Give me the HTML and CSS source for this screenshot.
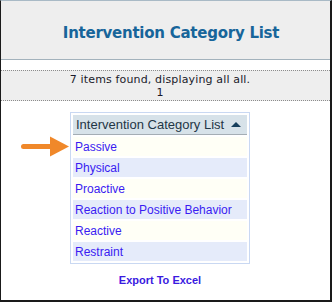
FILE: index.html
```html
<!DOCTYPE html>
<html>
<head>
<meta charset="utf-8">
<link rel="stylesheet" href="styles.css">
</head>
<body>
<div class="frame">
  <div class="header"><h1 class="title">Intervention Category List</h1></div>
  <div class="status">
    <div>7 items found, displaying all all.</div>
    <div>1</div>
  </div>
  <div class="main">
    <div class="table-wrap">
      <svg class="pointer" width="49" height="21" viewBox="0 0 49 21">
        <line x1="2.5" y1="10.5" x2="31" y2="10.5" stroke="#f0882a" stroke-width="5" stroke-linecap="round"/>
        <polygon points="29,0.5 48,10.5 29,20.5" fill="#f0882a"/>
      </svg>
      <table class="list">
        <thead>
          <tr><th><span>Intervention Category List</span><span class="sort"></span></th></tr>
        </thead>
        <tbody>
          <tr class="odd"><td><a>Passive</a></td></tr>
          <tr class="even"><td><a>Physical</a></td></tr>
          <tr class="odd"><td><a>Proactive</a></td></tr>
          <tr class="even"><td><a>Reaction to Positive Behavior</a></td></tr>
          <tr class="odd"><td><a>Reactive</a></td></tr>
          <tr class="even"><td><a>Restraint</a></td></tr>
        </tbody>
      </table>
    </div>
    <a class="export">Export To Excel</a>
  </div>
</div>
</body>
</html>
```

FILE: styles.css
```css
html, body {
  margin: 0;
  padding: 0;
  background: #ffffff;
}
.frame {
  width: 332px;
  height: 302px;
  box-sizing: border-box;
  border-top: 1px solid #a9bac6;
  border-left: 1px solid #1a1a1a;
  border-right: 2px solid #1a1a1a;
  border-bottom: 2px solid #1a1a1a;
  background: #ffffff;
  overflow: hidden;
}
.header {
  background: #eeeeee;
  border-bottom: 1px solid #a3b2bc;
  display: flex;
  align-items: center;
  justify-content: center;
  padding-left: 11px;
  padding-top: 6px;
  box-sizing: content-box;
  height: 52px;
}
.title {
  margin: 0;
  font-family: "DejaVu Sans", Verdana, sans-serif;
  font-weight: bold;
  font-size: 15px;
  color: #17659a;
  letter-spacing: -0.25px;
}
.status {
  margin-top: 10px;
  border-top: 1px dotted #8c8c8c;
  border-bottom: 1px dotted #8c8c8c;
  background: #eeeeee;
  height: 27px;
  padding-top: 2px;
  padding-right: 11px;
  text-align: center;
  font-family: "DejaVu Sans", Verdana, sans-serif;
  font-size: 11px;
  letter-spacing: 0.15px;
  line-height: 13px;
  color: #1a1a2a;
}
.main {
  display: flex;
  flex-direction: column;
  align-items: center;
  padding-right: 11px;
  padding-top: 11px;
}
.table-wrap {
  position: relative;
}
.pointer {
  position: absolute;
  left: -49px;
  top: 24px;
}
.list {
  width: 180px;
  border: 1px solid #c9d8f2;
  border-spacing: 2px;
  font-family: "Liberation Sans", Arial, sans-serif;
}
.list th {
  height: 20px;
  padding: 0 4px 0 3px;
  box-sizing: border-box;
  background: #d7e2e9;
  border-bottom: 1px solid #a4adb4;
  text-align: left;
  font-weight: normal;
  font-size: 13px;
  color: #1f3646;
}
.list th span {
  vertical-align: middle;
}
.sort {
  display: inline-block;
  width: 0;
  height: 0;
  margin-left: 7px;
  border-left: 5px solid transparent;
  border-right: 5px solid transparent;
  border-bottom: 5px solid #163f5c;
  position: relative;
  top: -1px;
}
.list td {
  height: 19px;
  padding: 0 2px;
  font-size: 12px;
}
.list a {
  color: #3a1cf2;
}
.odd td {
  background: #fffff6;
}
.even td {
  background: #e5ebfa;
}
.export {
  margin-top: 10px;
  font-family: "Liberation Sans", Arial, sans-serif;
  font-weight: bold;
  font-size: 11px;
  color: #3a1adf;
}
```
